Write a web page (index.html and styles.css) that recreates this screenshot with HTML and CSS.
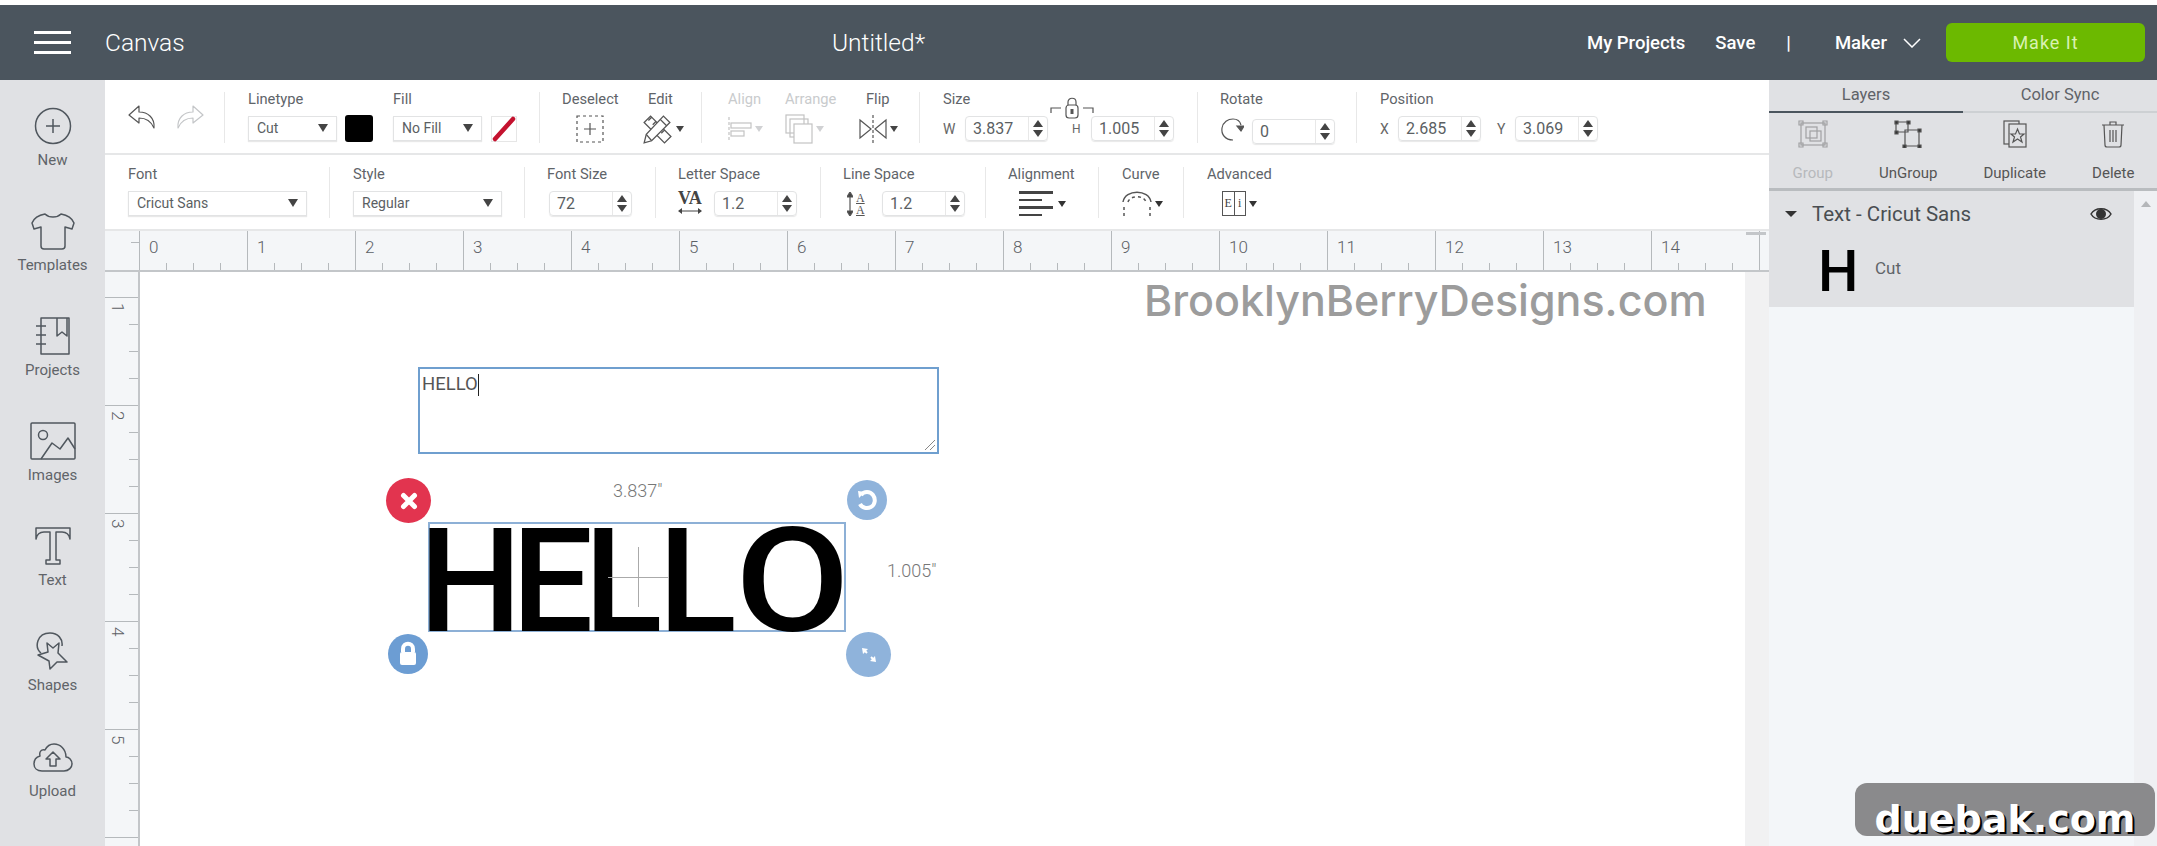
FILE: index.html
```html
<!DOCTYPE html>
<html lang="en">
<head>
    <meta charset="UTF-8">
    <meta name="viewport" content="width=device-width, initial-scale=1.0">
    <title>Canvas - Untitled</title>
    <link rel="stylesheet" href="styles.css">
</head>
<body>
    <header class="topbar">
        <div class="burger"><span></span><span></span><span></span></div>
        <div class="page-name">Canvas</div>
        <div class="doc-name">Untitled*</div>
        <nav class="top-links">
            <a class="link-projects">My Projects</a>
            <a class="link-save">Save</a>
            <span class="link-sep">|</span>
            <a class="link-maker">Maker</a>
            <svg class="chevron" width="18" height="10" viewBox="0 0 18 10"><path d="M1 1 L9 9 L17 1"/></svg>
            <button class="make-it">Make It</button>
        </nav>
    </header>

    <div class="main">
        <aside class="sidebar">
            <div class="side-item">
                <svg width="38" height="38" viewBox="0 0 38 38"><circle cx="19" cy="19" r="17.5"/><path d="M12 19 H26 M19 12 V26"/></svg>
                <span>New</span>
            </div>
            <div class="side-item">
                <svg width="44" height="38" viewBox="0 0 44 38"><path d="M14 2 C18 6 26 6 30 2 C36 3 41 6 43 11 L41 17 L34 15 V34 C34 36 33 37 31 37 H13 C11 37 10 36 10 34 V15 L3 17 L1 11 C3 6 8 3 14 2 Z"/></svg>
                <span>Templates</span>
            </div>
            <div class="side-item">
                <svg width="36" height="38" viewBox="0 0 36 38"><path d="M6 1 H34 V37 H6 Z M22 1 V19 L27 15 L32 19 V1 M1 9 H11 M1 18 H11 M1 27 H11"/></svg>
                <span>Projects</span>
            </div>
            <div class="side-item">
                <svg width="46" height="38" viewBox="0 0 46 38"><rect x="1" y="1" width="44" height="36" rx="1"/><circle cx="13" cy="13" r="4.5"/><path d="M11 37 L22 21 L30 27 L38 16 L45 27"/></svg>
                <span>Images</span>
            </div>
            <div class="side-item">
                <svg width="36" height="38" viewBox="0 0 36 38"><path d="M1 1 H35 V12 C34 7 31 5 27 5 H21 V33 H25 V37 H11 V33 H15 V5 H9 C5 5 2 7 1 12 Z"/></svg>
                <span>Text</span>
            </div>
            <div class="side-item">
                <svg width="36" height="38" viewBox="0 0 36 38"><path d="M12 11 L18 16 L24 11 L23 21 L32 30 L22 30 L15 37 L14 29 L3 23 L13 20 Z"/><path d="M6 21 C-1 15 2 1 15 1 C23 1 28 7 27 14"/></svg>
                <span>Shapes</span>
            </div>
            <div class="side-item">
                <svg width="40" height="38" viewBox="0 0 40 38"><path d="M9 33 H31 C36 33 39 29 39 26 C39 22 36 19 33 19 C33 11 27 6 21 6 C17 6 14 8 12 12 C8 11 6 14 7 18 C3 19 1 22 1 26 C1 30 4 33 9 33 Z"/><path d="M20 14 L27 21 H23 V28 H17 V21 H13 Z"/></svg>
                <span>Upload</span>
            </div>
        </aside>

        <div class="workspace">
            <div class="toolrow row-top">
                <div class="group g-history">
                    <svg class="undo" width="28" height="24" viewBox="0 0 28 24"><path d="M11 1 L1 10 L11 18 V13 C17 13 23 16 26 23 C27 13 20 7 11 7 Z"/></svg>
                    <svg class="undo redo" width="28" height="24" viewBox="0 0 28 24"><path d="M11 1 L1 10 L11 18 V13 C17 13 23 16 26 23 C27 13 20 7 11 7 Z"/></svg>
                </div>
                <div class="group g-line">
                    <div class="tool w-linetype">
                        <label>Linetype</label>
                        <div class="controls">
                            <div class="select s-line">Cut<i class="caret"></i></div>
                            <div class="swatch"></div>
                        </div>
                    </div>
                    <div class="tool">
                        <label>Fill</label>
                        <div class="controls">
                            <div class="select s-line">No Fill<i class="caret"></i></div>
                            <div class="no-fill"><svg width="26" height="26" viewBox="0 0 26 26"><path d="M4 23 L22 3"/></svg></div>
                        </div>
                    </div>
                </div>
                <div class="group g-edit">
                    <div class="tool w-deselect">
                        <label>Deselect</label>
                        <div class="controls centered">
                            <svg class="ico" width="28" height="28" viewBox="0 0 28 28"><rect x="1" y="1" width="26" height="26" stroke-dasharray="3 3"/><path d="M8 14 H20 M14 8 V20"/></svg>
                        </div>
                    </div>
                    <div class="tool">
                        <label>Edit</label>
                        <div class="controls pull-left">
                            <svg class="ico" width="32" height="30" viewBox="0 0 28 28"><path d="M2 8 L8 2 L27 21 L21 27 Z M6 6 L9 3 M10 10 L13 7 M14 14 L17 11 M18 18 L21 15"/><path d="M2 27 L4 19 L20 2 L26 8 L9 25 Z" fill="#fff"/><path d="M4 19 L9 25 M17 5 L23 11"/></svg>
                            <i class="caret small"></i>
                        </div>
                    </div>
                </div>
                <div class="group g-arrange">
                    <div class="tool w-align off">
                        <label>Align</label>
                        <div class="controls">
                            <svg class="ico" width="24" height="28" viewBox="0 0 24 28"><path d="M1 2 V27" stroke-dasharray="3 2"/><rect x="3" y="8" width="20" height="5"/><rect x="3" y="16" width="13" height="5"/></svg>
                            <i class="caret small"></i>
                        </div>
                    </div>
                    <div class="tool w-arr off">
                        <label>Arrange</label>
                        <div class="controls">
                            <svg class="ico" width="28" height="30" viewBox="0 0 28 30"><rect x="1" y="1" width="18" height="18"/><rect x="5" y="5" width="18" height="18"/><rect x="9" y="10" width="18" height="19" fill="#fff"/></svg>
                            <i class="caret small"></i>
                        </div>
                    </div>
                    <div class="tool">
                        <label>Flip</label>
                        <div class="controls pull-left">
                            <svg class="ico" width="28" height="30" viewBox="0 0 28 30"><path d="M1 6 L12 15 L1 24 Z M27 6 L16 15 L27 24 Z"/><path d="M14 1 V29" stroke-dasharray="3 2"/></svg>
                            <i class="caret small"></i>
                        </div>
                    </div>
                </div>
                <div class="group g-size">
                    <label>Size</label>
                    <div class="controls">
                        <span class="axis">W</span>
                        <div class="spin"><span>3.837</span><i class="arrows"></i></div>
                        <span class="axis h-axis">H</span>
                        <div class="spin"><span>1.005</span><i class="arrows"></i></div>
                    </div>
                    <svg class="size-lock ico" width="44" height="22" viewBox="0 0 44 22"><path d="M1 16 V11 H11 M33 11 H43 V16"/><rect x="16" y="8" width="12" height="13" rx="3"/><path d="M18 8 V5 C18 0 26 0 26 5 V8"/><path d="M22 12 V17" stroke-width="3"/></svg>
                </div>
                <div class="group g-rotate">
                    <label>Rotate</label>
                    <div class="controls">
                        <svg class="ico rotate-ico" width="24" height="24" viewBox="0 0 24 24"><path d="M13 23 C5 23 1 17 2 11 C3 5 8 2 13 2 C17 2 20 4 21 8"/><path d="M24 9 H17 L21 14 Z" fill="#555"/></svg>
                        <div class="spin spin-low"><span>0</span><i class="arrows"></i></div>
                    </div>
                </div>
                <div class="group g-position">
                    <label>Position</label>
                    <div class="controls">
                        <span class="axis axis-x">X</span>
                        <div class="spin"><span>2.685</span><i class="arrows"></i></div>
                        <span class="axis axis-y">Y</span>
                        <div class="spin"><span>3.069</span><i class="arrows"></i></div>
                    </div>
                </div>
            </div>

            <div class="toolrow row-text">
                <div class="group g-font">
                    <label>Font</label>
                    <div class="controls"><div class="select s-font">Cricut Sans<i class="caret"></i></div></div>
                </div>
                <div class="group g-style">
                    <label>Style</label>
                    <div class="controls"><div class="select s-style">Regular<i class="caret"></i></div></div>
                </div>
                <div class="group g-fsize">
                    <label>Font Size</label>
                    <div class="controls"><div class="spin fsize-spin"><span>72</span><i class="arrows"></i></div></div>
                </div>
                <div class="group g-letter">
                    <label>Letter Space</label>
                    <div class="controls">
                        <div class="va">VA<svg width="24" height="6" viewBox="0 0 24 6"><path d="M0 3 L4 0 V6 Z M24 3 L20 0 V6 Z" fill="#444"/><path d="M2 3 H22" stroke="#444"/></svg></div>
                        <div class="spin"><span>1.2</span><i class="arrows"></i></div>
                    </div>
                </div>
                <div class="group g-linesp">
                    <label>Line Space</label>
                    <div class="controls">
                        <svg class="ico lsp-arrow" width="6" height="24" viewBox="0 0 6 24"><path d="M3 2 V22"/><path d="M3 0 L6 5 H0 Z M3 24 L6 19 H0 Z" fill="#444"/></svg>
                        <div class="aa"><span>A</span><span>A</span></div>
                        <div class="spin"><span>1.2</span><i class="arrows"></i></div>
                    </div>
                </div>
                <div class="group g-alignment">
                    <label>Alignment</label>
                    <div class="controls centered-left">
                        <div class="bars"><i class="b1"></i><i class="b2"></i><i class="b3"></i><i class="b4"></i></div>
                        <i class="caret small dark"></i>
                    </div>
                </div>
                <div class="group g-curve">
                    <label>Curve</label>
                    <div class="controls">
                        <svg class="ico curve-ico" width="30" height="26" viewBox="0 0 30 26"><path d="M1 11 C3 -2 27 -2 29 11"/><path d="M6 11 C8 4 22 4 24 11 M2 16 V25 M28 16 V25" stroke-dasharray="3 3"/></svg>
                        <i class="caret small dark"></i>
                    </div>
                </div>
                <div class="group g-advanced">
                    <label>Advanced</label>
                    <div class="controls">
                        <div class="adv"><span>E</span><span>i</span></div>
                        <i class="caret small dark"></i>
                    </div>
                </div>
            </div>

            <div class="ruler-top">
                <div class="inch">0</div><div class="inch">1</div><div class="inch">2</div><div class="inch">3</div><div class="inch">4</div>
                <div class="inch">5</div><div class="inch">6</div><div class="inch">7</div><div class="inch">8</div><div class="inch">9</div>
                <div class="inch">10</div><div class="inch">11</div><div class="inch">12</div><div class="inch">13</div><div class="inch">14</div>
                <div class="ruler-end"></div>
            </div>

            <div class="stage">
                <div class="ruler-left">
                    <div class="vinch stub"></div>
                    <div class="vinch"><span>1</span></div>
                    <div class="vinch"><span>2</span></div>
                    <div class="vinch"><span>3</span></div>
                    <div class="vinch"><span>4</span></div>
                    <div class="vinch"><span>5</span></div>
                    <div class="vinch"></div>
                </div>
                <div class="board">
                    <div class="site-mark">BrooklynBerryDesigns.com</div>

                    <div class="text-entry">HELLO<i class="text-caret"></i>
                        <svg class="grip" width="12" height="12" viewBox="0 0 12 12"><path d="M1 11 L11 1 M6 11 L11 6"/></svg>
                    </div>

                    <div class="dim dim-w">3.837"</div>
                    <div class="dim dim-h">1.005"</div>

                    <div class="handle h-delete"><svg width="18" height="18" viewBox="0 0 18 18"><path d="M3.500 3.500 L14.500 14.500 M14.500 3.500 L3.500 14.500"/></svg></div>
                    <div class="handle h-rotate"><svg width="26" height="26" viewBox="0 0 26 26"><path d="M7 8 C10 4 16 4 19 8 C22 12 21 18 17 20 C13 22 8 21 6 17"/><path d="M4 4 L11 5 L5 11 Z" fill="#fff" stroke="none"/></svg></div>
                    <div class="handle h-lock"><svg width="24" height="26" viewBox="0 0 24 26"><path d="M7 11 V8 C7 1 17 1 17 8 V11"/><rect x="4" y="11" width="16" height="13" rx="2" fill="#fff" stroke="none"/></svg></div>
                    <div class="handle h-resize"><svg class="resize-ico" width="24" height="24" viewBox="0 0 24 24"><path d="M5 5 L11 6 L6 11 Z M19 19 L13 18 L18 13 Z" fill="#fff" stroke="none"/><path d="M8 8 L10 10 M14 14 L16 16"/></svg></div>

                    <div class="selection">
                        <div class="hello"><span class="g-h">H</span><span class="g-e">E</span><span class="g-l">L</span><span class="g-l2">L</span><span class="g-o">O</span></div>
                        <i class="cross-h"></i><i class="cross-v"></i>
                    </div>
                </div>
                <div class="board-edge"></div>
            </div>
        </div>

        <aside class="panel">
            <div class="tabs">
                <div class="tab active">Layers</div>
                <div class="tab">Color Sync</div>
            </div>
            <div class="actions">
                <div class="action a-group off">
                    <svg class="ico" width="30" height="28" viewBox="0 0 30 28"><rect x="3" y="3" width="24" height="22"/><rect x="8" y="7" width="11" height="11"/><rect x="12" y="11" width="11" height="10"/><path d="M1 1 H5 V5 H1 Z M25 1 H29 V5 H25 Z M1 23 H5 V27 H1 Z M25 23 H29 V27 H25 Z"/></svg>
                    <span>Group</span>
                </div>
                <div class="action a-ungroup">
                    <svg class="ico" width="28" height="28" viewBox="0 0 28 28"><path d="M2 2 H14 V12 H2 Z M11 10 H25 V26 H11 Z"/><path d="M1 1 H4 V4 H1 Z M13 1 H16 V4 H13 Z M1 11 H4 V14 H1 Z M9 25 H12 V28 H9 Z M24 25 H27 V28 H24 Z M24 9 H27 V12 H24 Z" fill="#333"/></svg>
                    <span>UnGroup</span>
                </div>
                <div class="action a-dup">
                    <svg class="ico" width="24" height="28" viewBox="0 0 24 28"><rect x="1" y="1" width="15" height="23"/><rect x="6" y="4" width="17" height="23" fill="#e0e1e4"/><path d="M14.5 9 L16.5 14 H21 L17.5 17 L19 22 L14.5 19 L10 22 L11.500 17 L8 14 H12.500 Z"/></svg>
                    <span>Duplicate</span>
                </div>
                <div class="action a-del">
                    <svg class="ico" width="24" height="28" viewBox="0 0 24 28"><path d="M1 5 H23 M9 5 V2 H15 V5 M3 5 L4 25 C4 27 5 27 6 27 H18 C19 27 20 27 20 25 L21 5 M9 10 V22 M12 10 V22 M15 10 V22"/></svg>
                    <span>Delete</span>
                </div>
            </div>
            <div class="layers">
                <div class="layer-list">
                    <div class="layer-head">
                        <i class="caret layer-caret"></i>
                        <span class="layer-name">Text - Cricut Sans</span>
                        <svg class="eye" width="22" height="16" viewBox="0 0 22 16"><path d="M1 8 C5 1 17 1 21 8 C17 15 5 15 1 8 Z" fill="none" stroke="#333" stroke-width="1.500"/><circle cx="11" cy="8" r="5" fill="#333"/></svg>
                    </div>
                    <div class="layer-row">
                        <span class="layer-thumb">H</span>
                        <span class="layer-type">Cut</span>
                    </div>
                </div>
                <div class="layer-scroll"><i class="scroll-up"></i></div>
            </div>
        </aside>
    </div>

    <div class="stamp">duebak.com</div>
</body>
</html>
```

FILE: styles.css
```css
* {
    box-sizing: border-box;
}
html, body {
    height: 100%;
}
body {
    margin: 0;
    padding-top: 5px;
    display: flex;
    flex-direction: column;
    overflow: hidden;
    background-color: #fff;
    color: #606469;
    font-family: Roboto, "Liberation Sans", sans-serif;
    font-size: 14px;
}

/* top bar */
.topbar {
    height: 75px;
    flex: none;
    display: flex;
    align-items: center;
    background-color: #4b555e;
    color: #fff;
}
.burger {
    width: 37px;
    margin-left: 34px;
    display: flex;
    flex-direction: column;
    gap: 7px;
}
.burger span {
    height: 3px;
    background-color: #fff;
}
.page-name {
    margin-left: 34px;
    width: 727px;
    font-size: 24.5px;
    font-weight: 300;
}
.doc-name {
    font-size: 24.5px;
    font-weight: 300;
}
.top-links {
    margin-left: auto;
    display: flex;
    align-items: center;
    font-size: 18.5px;
    font-weight: 500;
    padding-right: 12px;
}
.link-save {
    margin-left: 30px;
}
.link-sep {
    margin-left: 31px;
}
.link-maker {
    margin-left: 44px;
}
.chevron {
    margin-left: 16px;
    fill: none;
    stroke: #fff;
    stroke-width: 1.5;
}
.make-it {
    width: 199px;
    height: 39px;
    margin-left: 25px;
    border: none;
    border-radius: 6px;
    background-color: #6cb900;
    color: #d9f2b3;
    font-family: inherit;
    font-size: 18px;
    letter-spacing: 1px;
}

.main {
    flex: 1;
    display: flex;
    min-height: 0;
}

/* left sidebar */
.sidebar {
    width: 105px;
    flex: none;
    padding-top: 27px;
    background-color: #e0e1e4;
}
.side-item {
    height: 105.1px;
    display: flex;
    flex-direction: column;
    align-items: center;
}
.side-item svg {
    height: 38px;
    fill: none;
    stroke: #50575e;
    stroke-width: 1.5;
    stroke-linejoin: round;
}
.side-item span {
    margin-top: 7px;
    line-height: 16px;
    font-size: 15px;
}

.workspace {
    width: 1664px;
    flex: none;
    display: flex;
    flex-direction: column;
}

/* tool rows */
.toolrow {
    display: flex;
    border-bottom: 2px solid #e6e7e8;
}
.row-top {
    height: 75px;
}
.row-text {
    height: 76px;
}
.group {
    position: relative;
    height: 51px;
    margin-top: 12px;
    border-right: 1px solid #e8e8e8;
}
.group:last-child {
    border-right: none;
}
label {
    display: block;
    line-height: 14px;
    font-size: 14.7px;
    white-space: nowrap;
}
.controls {
    height: 25px;
    margin-top: 10px;
    display: flex;
    align-items: center;
}
.pull-left {
    margin-left: -7px;
}
.tool {
    display: flex;
    flex-direction: column;
}
.off {
    color: #c9cbcd;
}
.off svg {
    opacity: 0.35;
}
.ico {
    flex: none;
    fill: none;
    stroke: #555;
    stroke-width: 1.2;
}
.curve-ico {
    stroke-width: 1.5;
}

.g-history {
    width: 120px;
    padding-left: 23px;
    display: flex;
    gap: 20px;
    padding-top: 13px;
}
.undo {
    fill: none;
    stroke: #555;
    stroke-width: 1.2;
    stroke-linejoin: round;
}
.redo {
    transform: scaleX(-1);
    stroke: #c4c6c8;
}
.g-line {
    width: 315px;
    padding-left: 23px;
    display: flex;
}
.w-linetype {
    width: 145px;
}
.g-edit {
    width: 162px;
    padding-left: 22px;
    display: flex;
}
.w-deselect {
    width: 86px;
}
.centered {
    padding-left: 14px;
}
.g-arrange {
    width: 218px;
    padding-left: 26px;
    display: flex;
}
.w-align {
    width: 57px;
}
.w-arr {
    width: 81px;
}
.g-size {
    width: 278px;
    padding-left: 23px;
}
.g-rotate {
    width: 159px;
    padding-left: 22px;
}
.g-position {
    padding-left: 23px;
}
.size-lock {
    position: absolute;
    left: 130px;
    top: 5px;
}
.axis {
    width: 22px;
    flex: none;
    color: #666;
}
.h-axis {
    width: 19px;
    margin-left: 24px;
    font-size: 12px;
}
.axis-x {
    width: 18px;
}
.axis-y {
    width: 18px;
    margin-left: 16px;
}
.rotate-ico {
    margin-right: 8px;
}
.spin-low {
    position: relative;
    top: 3px;
}

.g-font {
    width: 225px;
    padding-left: 23px;
}
.g-style {
    width: 195px;
    padding-left: 23px;
}
.g-fsize {
    width: 131px;
    padding-left: 22px;
}
.fsize-spin {
    margin-left: 2px;
}
.g-letter {
    width: 165px;
    padding-left: 22px;
}
.g-linesp {
    width: 165px;
    padding-left: 22px;
}
.g-alignment {
    width: 113px;
    padding-left: 22px;
}
.g-curve {
    width: 85px;
    padding-left: 23px;
}
.g-advanced {
    padding-left: 23px;
}

/* form bits */
.select {
    height: 25px;
    display: flex;
    align-items: center;
    justify-content: space-between;
    padding: 0 8px 1px;
    border: 1px solid #e2e3e4;
    box-shadow: 0 1px 1px #e8e8e8;
    font-size: 14px;
    color: #5b5f63;
}
.s-line {
    width: 89px;
}
.s-font {
    width: 179px;
}
.s-style {
    width: 149px;
}
.caret {
    width: 0;
    height: 0;
    flex: none;
    border-left: 5px solid transparent;
    border-right: 5px solid transparent;
    border-top: 8px solid #444;
}
.caret.small {
    margin-left: 3px;
    border-left-width: 4px;
    border-right-width: 4px;
    border-top-width: 6px;
}
.off .caret {
    border-top-color: #d0d1d3;
}
.caret.dark {
    border-top-color: #333;
}
.swatch {
    width: 28px;
    height: 27px;
    margin-left: 8px;
    border-radius: 3px;
    background-color: #000;
}
.no-fill {
    width: 26px;
    height: 26px;
    margin-left: 9px;
    border: 1px solid #e6e6e6;
}
.no-fill svg {
    display: block;
    margin: -1px;
    fill: none;
    stroke: #c4122f;
    stroke-width: 4.5;
    stroke-linecap: round;
}
.spin {
    width: 83px;
    height: 25px;
    flex: none;
    display: flex;
    align-items: center;
    justify-content: space-between;
    border: 1px solid #e2e3e4;
    border-radius: 4px;
    box-shadow: 0 1px 1px #e8e8e8;
    font-size: 16px;
    color: #5b5f63;
}
.spin span {
    padding-left: 7px;
}
.arrows {
    position: relative;
    width: 19px;
    height: 23px;
    border-left: 1px solid #e8e8e8;
}
.arrows::before,
.arrows::after {
    content: "";
    position: absolute;
    left: 4px;
    border-left: 5px solid transparent;
    border-right: 5px solid transparent;
}
.arrows::before {
    top: 3px;
    border-bottom: 7px solid #444;
}
.arrows::after {
    bottom: 3px;
    border-top: 7px solid #444;
}
.va {
    width: 36px;
    flex: none;
    display: flex;
    flex-direction: column;
    align-items: flex-start;
    font-family: "Liberation Serif", serif;
    font-size: 18px;
    font-weight: bold;
    line-height: 17px;
    color: #444;
    position: relative;
    top: -2px;
}
.va svg {
    margin-top: 1px;
}
.lsp-arrow {
    margin-left: 4px;
}
.aa {
    width: 26px;
    margin-left: 3px;
    flex: none;
    font-family: "Liberation Serif", serif;
    font-size: 12px;
    line-height: 12px;
    color: #555;
}
.aa span {
    display: block;
    text-decoration: underline;
}
.bars {
    width: 36px;
    margin-left: 11px;
    display: flex;
    flex-direction: column;
    gap: 5px;
}
.bars i {
    height: 2.5px;
    background-color: #444;
}
.bars .b1 {
    width: 34px;
}
.bars .b2 {
    width: 23px;
}
.bars .b3 {
    width: 34px;
}
.bars .b4 {
    width: 23px;
}
.adv {
    width: 24px;
    height: 25px;
    margin-left: 15px;
    display: flex;
    border: 1px solid #555;
    font-family: "Liberation Serif", serif;
    font-size: 12px;
    line-height: 23px;
    text-align: center;
    color: #444;
}
.adv span {
    flex: 1;
}
.adv span + span {
    border-left: 1px solid #555;
}

/* rulers */
.ruler-top {
    position: relative;
    height: 41px;
    flex: none;
    display: flex;
    padding-left: 34px;
    background-color: #f4f6f8;
    border-bottom: 2px solid #c3c6c9;
}
.ruler-top::before {
    content: "";
    position: absolute;
    left: 26px;
    top: 11px;
    width: 8px;
    height: 1px;
    background-color: #b5b9bc;
}
.inch {
    position: relative;
    width: 108px;
    flex: none;
    padding: 6px 0 0 9px;
    border-left: 1px solid #b5b9bc;
    font-size: 17px;
    font-weight: 300;
    color: #5c6166;
    background-image: repeating-linear-gradient(to right, transparent 0, transparent 26px, #b5b9bc 26px, #b5b9bc 27px);
    background-size: 100% 7px;
    background-position: left bottom;
    background-repeat: no-repeat;
}
.ruler-end {
    width: 2px;
    border-left: 1px solid #b5b9bc;
    position: relative;
}
.ruler-end::before {
    content: "";
    position: absolute;
    top: 1px;
    left: -14px;
    width: 20px;
    height: 3px;
    background-color: #c3c6c9;
}

.stage {
    flex: 1;
    display: flex;
    min-height: 0;
}
.ruler-left {
    width: 35px;
    flex: none;
    background-color: #f4f6f8;
    border-right: 2px solid #c3c6c9;
    overflow: hidden;
}
.vinch {
    height: 108px;
    position: relative;
    border-top: 1px solid #b5b9bc;
    background-image: repeating-linear-gradient(to bottom, transparent 0, transparent 26px, #b5b9bc 26px, #b5b9bc 27px);
    background-size: 9px 100%;
    background-position: right top;
    background-repeat: no-repeat;
}
.vinch.stub {
    height: 25px;
    border-top: none;
    background-image: none;
}
.vinch span {
    position: absolute;
    left: 4px;
    top: 5px;
    writing-mode: vertical-rl;
    font-size: 17px;
    font-weight: 300;
    line-height: 17px;
    color: #5c6166;
}

/* canvas */
.board {
    position: relative;
    width: 1605px;
    flex: none;
    background-color: #fff;
}
.board-edge {
    flex: 1;
    background-color: #f1f1f2;
}
.site-mark {
    position: absolute;
    left: 1004px;
    top: 4px;
    font-family: Inter, sans-serif;
    font-size: 43px;
    font-weight: 500;
    line-height: 48px;
    white-space: nowrap;
    color: #9c9c9c;
}
.text-entry {
    position: absolute;
    left: 278px;
    top: 95px;
    width: 521px;
    height: 87px;
    padding: 3px 2px;
    border: 2px solid #6f9fcf;
    font-size: 18.5px;
    line-height: 24px;
    color: #555;
}
.text-caret {
    display: inline-block;
    width: 1px;
    height: 22px;
    vertical-align: middle;
    background-color: #222;
}
.grip {
    position: absolute;
    right: 1px;
    bottom: 1px;
    fill: none;
    stroke: #888;
}
.dim {
    position: absolute;
    font-size: 18px;
    font-weight: 300;
    line-height: 20px;
    color: #777;
}
.dim-w {
    left: 473px;
    top: 209px;
}
.dim-h {
    left: 747px;
    top: 289px;
}
.handle {
    position: absolute;
    display: flex;
    align-items: center;
    justify-content: center;
    border-radius: 50%;
}
.handle svg {
    fill: none;
    stroke: #fff;
    stroke-width: 4;
}
.h-delete {
    left: 246px;
    top: 206px;
    width: 45px;
    height: 45px;
    background-color: #e2344f;
}
.h-delete svg {
    stroke-width: 5;
    stroke-linecap: round;
}
.h-rotate {
    left: 707px;
    top: 208px;
    width: 40px;
    height: 40px;
    background-color: #8fb3db;
}
.h-lock {
    left: 248px;
    top: 362px;
    width: 40px;
    height: 40px;
    background-color: #6c9dd3;
}
.h-resize {
    left: 706px;
    top: 360px;
    width: 45px;
    height: 45px;
    background-color: #8fb3db;
}
.handle .resize-ico {
    stroke-width: 2;
}
.selection {
    position: absolute;
    left: 288px;
    top: 250px;
    width: 418px;
    height: 110px;
    border: 2px solid #8db0d6;
}
.hello {
    position: absolute;
    left: -11px;
    top: -13px;
    display: flex;
    font-size: 145px;
    font-weight: 500;
    line-height: 140px;
    color: #000;
}
.hello span {
    display: block;
    flex: none;
}
.g-h {
    letter-spacing: -10.4px;
}
.g-e {
    letter-spacing: -9.4px;
}
.g-l {
    letter-spacing: -4px;
}
.g-l2 {
    letter-spacing: -2px;
}
.g-o {
    transform: scaleX(1.15);
    transform-origin: left center;
}
.cross-h {
    position: absolute;
    left: 178px;
    top: 53px;
    width: 60px;
    height: 1px;
    background-color: #aaa;
}
.cross-v {
    position: absolute;
    left: 208px;
    top: 23px;
    width: 1px;
    height: 60px;
    background-color: #aaa;
}

/* right panel */
.panel {
    flex: 1;
    display: flex;
    flex-direction: column;
    min-width: 0;
    background-color: #e0e1e4;
}
.tabs {
    display: flex;
    height: 33px;
}
.tab {
    flex: 1;
    padding-top: 5px;
    border-bottom: 2px solid #cdd0d3;
    text-align: center;
    font-size: 16.5px;
    color: #5f6368;
}
.tab.active {
    border-bottom-color: #4b555e;
}
.actions {
    height: 78px;
    flex: none;
    position: relative;
    display: flex;
    border-bottom: 3px solid #b9bcbf;
}
.action {
    padding-top: 7px;
    display: flex;
    flex-direction: column;
    align-items: center;
    gap: 16px;
    font-size: 15px;
    color: #555;
}
.action.off {
    color: #b7b9bc;
}
.action.off .ico {
    opacity: 0.45;
}
.a-group {
    width: 88px;
}
.a-ungroup {
    width: 104px;
}
.a-dup {
    width: 110px;
}
.a-del {
    width: 88px;
}
.layers {
    flex: 1;
    display: flex;
    background-color: #f3f6f9;
}
.layer-list {
    width: 365px;
    flex: none;
}
.layer-head {
    height: 46px;
    display: flex;
    align-items: center;
    background-color: #e0e1e4;
    padding-left: 16px;
}
.layer-caret {
    border-left-width: 6px;
    border-right-width: 6px;
    border-top-width: 6px;
    border-top-color: #333;
}
.layer-name {
    margin-left: 15px;
    font-size: 20.5px;
    color: #4a4e52;
}
.eye {
    margin-left: auto;
    margin-right: 22px;
}
.layer-row {
    height: 70px;
    display: flex;
    align-items: center;
    background-color: #e0e1e4;
    padding-left: 49px;
}
.layer-thumb {
    width: 57px;
    font-size: 57px;
    font-weight: 500;
    line-height: 60px;
    color: #000;
}
.layer-type {
    margin-bottom: 8px;
    font-size: 17px;
}
.layer-scroll {
    flex: 1;
    padding-top: 10px;
    background-color: #eff0f3;
    display: flex;
    justify-content: center;
}
.scroll-up {
    width: 0;
    height: 0;
    border-left: 5px solid transparent;
    border-right: 5px solid transparent;
    border-bottom: 6px solid #b4b6b9;
}

/* corner stamp */
.stamp {
    position: absolute;
    left: 1855px;
    top: 783px;
    width: 300px;
    height: 53px;
    padding-top: 12px;
    border-radius: 12px;
    background-color: #8a8a8c;
    text-align: center;
    font-family: "DejaVu Sans", sans-serif;
    font-size: 38px;
    font-weight: bold;
    line-height: 48px;
    color: #fff;
    text-shadow: 2px 2px 0 #000;
}
```
